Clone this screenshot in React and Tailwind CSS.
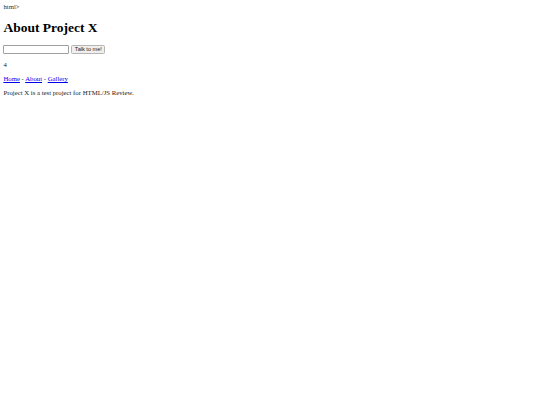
export default function App() {
  return (
    <div className="min-h-[405px] w-[540px] bg-white p-[3.4px] text-black antialiased">
      <div className="font-['Liberation_Serif',serif] text-[6.75px] leading-[7.8px] text-[#1a1a1a]">
        <div className="text-[#333]">html&gt;</div>
        <h1 className="my-[9px] text-[13.5px] font-bold leading-[15.5px] text-black">About Project X</h1>
        <div className="flex h-[10px] items-center gap-[2px]">
          <input
            type="text"
            className="h-[9.5px] w-[66px] rounded-[1px] border border-[#a0a0a0] bg-white"
          />
          <button className="flex h-[9px] w-[34px] items-center justify-center rounded-[1.5px] border border-[#b5b5b5] bg-[#efefef] font-['Liberation_Sans',sans-serif] text-[5.6px] leading-none text-[#222]">
            Talk to me!
          </button>
        </div>
        <p className="mt-[6.5px]">4</p>
        <p className="mt-[6.5px]">
          <a href="#" className="text-[#0000ee] underline">Home</a> -{" "}
          <a href="#" className="text-[#0000ee] underline">About</a> -{" "}
          <a href="#" className="text-[#0000ee] underline">Gallery</a>
        </p>
        <p className="mt-[6px]">Project X is a test project for HTML/JS Review.</p>
      </div>
    </div>
  );
}
